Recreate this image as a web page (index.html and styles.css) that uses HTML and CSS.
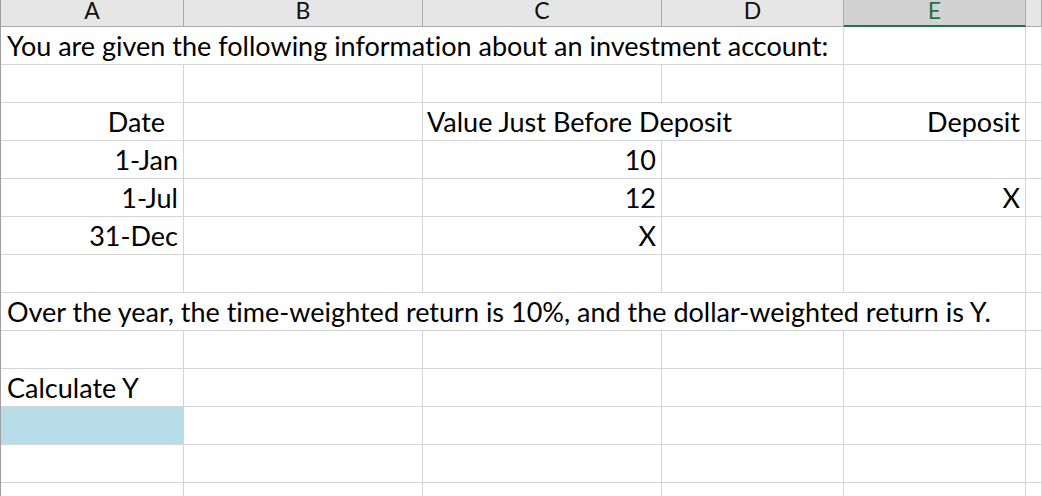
FILE: index.html
```html
<!DOCTYPE html>
<html>
<head>
<meta charset="utf-8">
<link rel="stylesheet" href="styles.css">
</head>
<body>
<div class="sheet">
  <div class="row head">
    <div class="c">A</div>
    <div class="c">B</div>
    <div class="c">C</div>
    <div class="c">D</div>
    <div class="c sel">E</div>
    <div class="c"></div>
  </div>
  <div class="row">
    <div class="c span-ad">You are given the following information about an investment account:</div>
    <div class="c"></div>
    <div class="c"></div>
  </div>
  <div class="row">
    <div class="c"></div><div class="c"></div><div class="c"></div><div class="c"></div><div class="c"></div><div class="c"></div>
  </div>
  <div class="row">
    <div class="c r pad-date">Date</div>
    <div class="c"></div>
    <div class="c span-cd">Value Just Before Deposit</div>
    <div class="c r">Deposit</div>
    <div class="c"></div>
  </div>
  <div class="row">
    <div class="c r">1-Jan</div>
    <div class="c"></div>
    <div class="c r">10</div>
    <div class="c"></div><div class="c"></div><div class="c"></div>
  </div>
  <div class="row">
    <div class="c r">1-Jul</div>
    <div class="c"></div>
    <div class="c r">12</div>
    <div class="c"></div>
    <div class="c r">X</div>
    <div class="c"></div>
  </div>
  <div class="row">
    <div class="c r">31-Dec</div>
    <div class="c"></div>
    <div class="c r">X</div>
    <div class="c"></div><div class="c"></div><div class="c"></div>
  </div>
  <div class="row">
    <div class="c"></div><div class="c"></div><div class="c"></div><div class="c"></div><div class="c"></div><div class="c"></div>
  </div>
  <div class="row">
    <div class="c span-ae">Over the year, the time-weighted return is 10%, and the dollar-weighted return is Y.</div>
    <div class="c"></div>
  </div>
  <div class="row">
    <div class="c"></div><div class="c"></div><div class="c"></div><div class="c"></div><div class="c"></div><div class="c"></div>
  </div>
  <div class="row">
    <div class="c">Calculate Y</div>
    <div class="c"></div><div class="c"></div><div class="c"></div><div class="c"></div><div class="c"></div>
  </div>
  <div class="row">
    <div class="c fill"></div>
    <div class="c"></div><div class="c"></div><div class="c"></div><div class="c"></div><div class="c"></div>
  </div>
  <div class="row">
    <div class="c"></div><div class="c"></div><div class="c"></div><div class="c"></div><div class="c"></div><div class="c"></div>
  </div>
  <div class="row last">
    <div class="c"></div><div class="c"></div><div class="c"></div><div class="c"></div><div class="c"></div><div class="c"></div>
  </div>
</div>
</body>
</html>
```

FILE: styles.css
```css
html, body {
  margin: 0;
  padding: 0;
  background: #ffffff;
}
body {
  width: 1042px;
  height: 496px;
  overflow: hidden;
}
.sheet {
  height: 496px;
  overflow: hidden;
  border-left: 1px solid #9f9f9f;
  font-family: Lato, "Open Sans", sans-serif;
  font-variant-ligatures: none;
  color: #000;
}
.row {
  display: grid;
  grid-template-columns: 183px 239px 239px 182px 182px 1fr;
  height: 38px;
  box-sizing: border-box;
}
.row.last {
  height: 14px;
}
.c {
  box-sizing: border-box;
  border-right: 1px solid #d4d4d4;
  border-bottom: 1px solid #d4d4d4;
  display: flex;
  align-items: flex-end;
  padding: 0 5px 3px 6px;
  font-size: 27px;
  line-height: 30px;
  white-space: nowrap;
  overflow: visible;
}
.r {
  justify-content: flex-end;
}
.pad-date {
  padding-right: 18px;
}
.span-ad {
  grid-column: 1 / 5;
}
.span-cd {
  grid-column: 3 / 5;
  padding-left: 4px;
}
.span-ae {
  grid-column: 1 / 6;
}
.fill {
  background: #b7dee8;
}
.head {
  height: 27px;
  background: #e6e6e6;
}
.head .c {
  border-right: 1px solid #ababab;
  border-bottom: 1px solid #ababab;
  justify-content: center;
  align-items: flex-start;
  padding: 0;
  font-size: 23px;
  line-height: 20px;
  color: #111;
}
.head .c.sel {
  background: #d2d2d2;
  border-bottom: 2px solid #217346;
  color: #217346;
}
```
